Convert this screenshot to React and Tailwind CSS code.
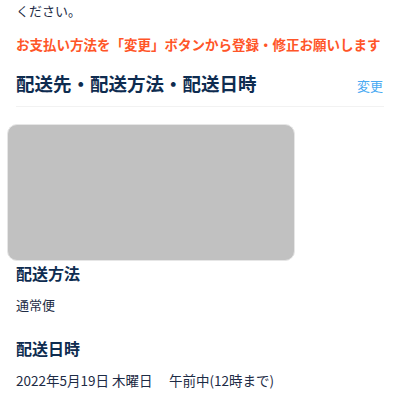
export default function App() {
  return (
    <div
      className="w-[400px] h-[400px] overflow-hidden bg-white"
      style={{ fontFamily: '"Noto Sans CJK JP", "Noto Sans", sans-serif' }}
    >
      {/* NOTICE */}
      <div className="px-4">
        <p className="text-[13px] leading-[24px] text-[#1d2b45] -mt-[1px]">ください。</p>
        <p className="mt-[9px] text-[13.5px] leading-[24px] font-bold text-[#ff5528] whitespace-nowrap">
          お支払い方法を「変更」ボタンから登録・修正お願いします
        </p>
      </div>

      {/* SECTION HEADER */}
      <div className="mx-4 mt-[14px] flex items-end justify-between border-b border-[#f2f2f2] pb-[10px]">
        <h2 className="text-[18.5px] leading-[26px] font-bold text-[#0e2c50]">
          配送先・配送方法・配送日時
        </h2>
        <span className="text-[13px] leading-[20px] text-[#4aaaf2] mr-[1px]">変更</span>
      </div>

      {/* ADDRESS PLACEHOLDER */}
      <div className="ml-[7px] mt-[17px] w-[288px] h-[137px] rounded-[10px] bg-[#c1c1c1] border border-[#e6e6e6]" />

      {/* DELIVERY DETAILS */}
      <div className="px-4">
        <h3 className="mt-0 text-[16px] leading-[24px] font-bold text-[#0e2c50]">配送方法</h3>
        <p className="mt-[10px] text-[13px] leading-[20px] text-[#1d2b45]">通常便</p>
        <h3 className="mt-[21px] text-[16px] leading-[24px] font-bold text-[#0e2c50]">配送日時</h3>
        <p className="mt-[10px] text-[13.5px] leading-[20px] text-[#1d2b45] whitespace-nowrap">
          2022年5月19日 木曜日　 午前中(12時まで)
        </p>
      </div>
    </div>
  );
}
